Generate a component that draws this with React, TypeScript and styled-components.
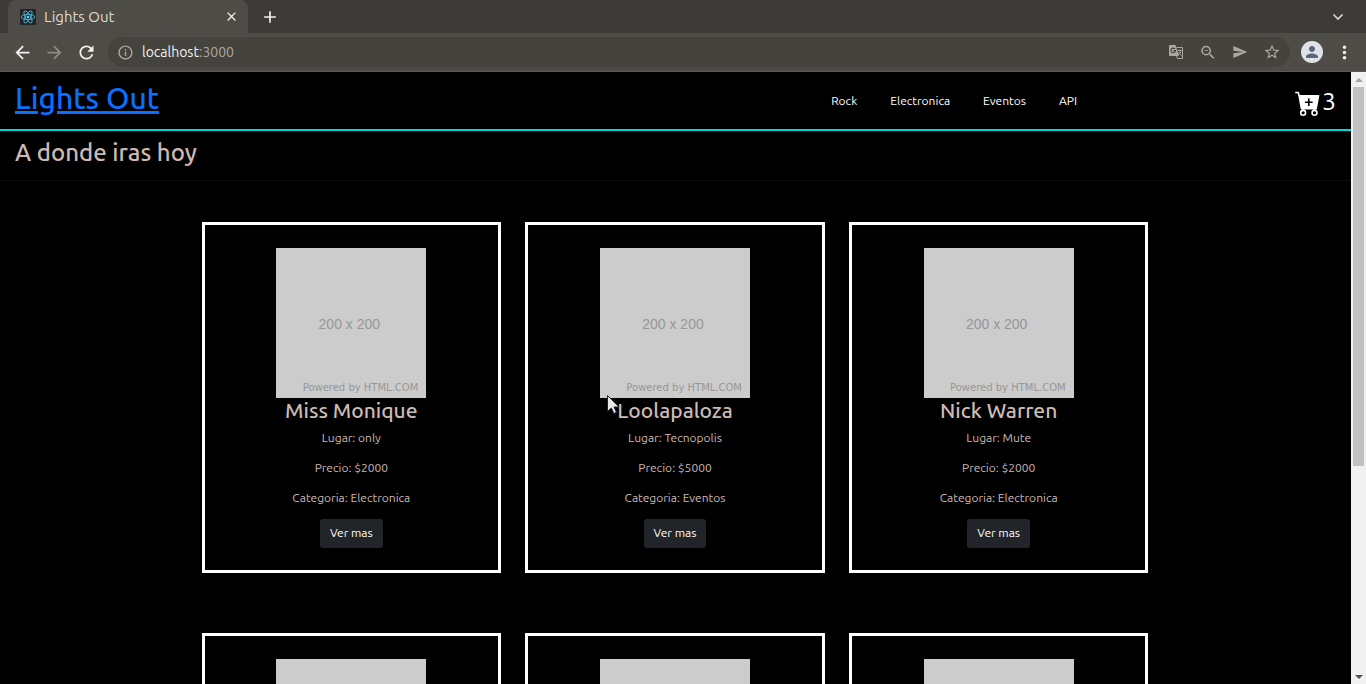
import React from "react";
import styled, { createGlobalStyle } from "styled-components";
import { BsCartPlusFill } from "react-icons/bs";
import {
  MdAdd,
  MdArrowBack,
  MdArrowForward,
  MdClose,
  MdInfoOutline,
  MdMoreVert,
  MdPerson,
  MdRefresh,
  MdSend,
  MdStarBorder,
  MdZoomOut,
} from "react-icons/md";

const GlobalStyle = createGlobalStyle`
  *, *::before, *::after { box-sizing: border-box; }
  body {
    margin: 0;
    background: #000;
    font-family: Ubuntu, "Noto Sans", sans-serif;
    font-size: 12px;
    line-height: 18px;
    overflow: hidden;
  }
  h1, h2, h3, p { margin: 0; }
  button { border: 0; padding: 0; background: none; font: inherit; color: inherit; }
`;

const Window = styled.div`
  display: flex;
  flex-direction: column;
  height: 100vh;
  overflow: hidden;
`;

const TabStrip = styled.div`
  display: flex;
  align-items: center;
  height: 33px;
  flex: none;
  padding: 0 20px 0 8px;
  background: #3c3b37;
  color: #dfdbd2;
`;

const Tab = styled.div`
  display: flex;
  align-items: center;
  gap: 8px;
  width: 240px;
  height: 33px;
  padding: 0 9px 0 12px;
  border-radius: 8px 8px 0 0;
  background: #4d4c46;
  font-size: 15px;
`;

const TabTitle = styled.span`
  flex: 1;
`;

const IconButton = styled.button<{ $size: number; $color?: string }>`
  display: flex;
  align-items: center;
  justify-content: center;
  flex: none;
  width: ${(p) => p.$size}px;
  height: ${(p) => p.$size}px;
  color: ${(p) => p.$color ?? "#f2f1ee"};
`;

const NewTab = styled(IconButton)`
  margin: 0 auto 0 12px;
`;

const Toolbar = styled.div`
  display: flex;
  align-items: center;
  gap: 11px;
  flex: none;
  height: 39px;
  padding: 0 11px 0 12px;
  background: #4d4c46;
  border-bottom: 1px solid #5b5a54;
`;

const AddressBar = styled.div`
  display: flex;
  align-items: center;
  flex: 1;
  gap: 8px;
  height: 30px;
  padding: 0 9px;
  border-radius: 15px;
  background: #44433d;
  color: #a9a8a3;
`;

const AddressInput = styled.div`
  flex: 1;
  font-size: 14px;
  color: #a9a8a3;

  b {
    font-weight: 400;
    color: #f2f1ee;
  }
`;

const AddressActions = styled.div`
  display: flex;
  gap: 14px;
`;

const Avatar = styled.button`
  display: flex;
  align-items: center;
  justify-content: center;
  width: 22px;
  height: 22px;
  border-radius: 50%;
  background: #dee1e6;
  color: #5a6478;
`;

const Viewport = styled.div`
  display: flex;
  flex: 1;
  min-height: 0;
`;

const Page = styled.main`
  flex: 1;
  min-width: 0;
  overflow: hidden;
  background: #000;
  color: #ccbab5;
`;

const Header = styled.header`
  display: grid;
  grid-template-columns: 1fr auto 259px;
  align-items: center;
  height: 59px;
  padding: 0 15px;
  border-bottom: 2px solid #00d8d8;
`;

const Brand = styled.a`
  display: block;
  padding-bottom: 6px;
  font-size: 30px;
  font-weight: 500;
  line-height: 36px;
  color: #0d6efd;
  text-decoration: underline;
`;

const Nav = styled.nav`
  display: flex;
  gap: 33px;

  a {
    color: #fff;
    text-decoration: none;
  }
`;

const Cart = styled.button`
  display: flex;
  align-items: center;
  justify-self: end;
  gap: 1px;
  color: #fff;
  font-size: 25px;
  line-height: 30px;

  svg {
    margin-top: 4px;
  }
`;

const Greeting = styled.h2`
  height: 50px;
  padding: 8px 15px;
  border-bottom: 1px solid #0b0b0b;
  font-size: 24px;
  font-weight: 500;
  line-height: 28px;
`;

const Grid = styled.section`
  display: grid;
  grid-template-columns: repeat(3, 1fr);
  gap: 60px 24px;
  max-width: 948px;
  margin: 41px auto 0;
  padding-right: 1px;
`;

const CardBox = styled.article`
  display: flex;
  flex-direction: column;
  align-items: center;
  gap: 12px;
  padding: 23px 22px 22px;
  border: 3px solid #fff;
`;

const Placeholder = styled.div`
  display: flex;
  flex-direction: column;
  justify-content: flex-end;
  width: 150px;
  height: 150px;
  padding: 0 8px 1px;
  background: #ccc;
  color: #969696;
`;

const Dimensions = styled.span`
  margin-bottom: 46px;
  padding-right: 4px;
  text-align: center;
  font-family: "Liberation Sans", sans-serif;
  font-size: 14px;
`;

const Credit = styled.span`
  text-align: right;
  font-family: "DejaVu Sans", sans-serif;
  font-size: 10px;
`;

const CardTitle = styled.h3`
  margin: -12px 0 -6px;
  padding-bottom: 1px;
  font-size: 21px;
  font-weight: 500;
  line-height: 24px;
`;

const More = styled.button`
  height: 29px;
  padding: 0 10px 2px;
  border-radius: 3px;
  background: #212529;
  color: #fff;
`;

const ScrollTrack = styled.div`
  display: flex;
  flex-direction: column;
  align-items: center;
  width: 15px;
  flex: none;
  background: #f1f1f1;
`;

const ScrollArrow = styled.button<{ $down?: boolean }>`
  display: flex;
  align-items: center;
  justify-content: center;
  width: 15px;
  height: 15px;
  margin-top: ${(p) => (p.$down ? "auto" : "0")};
  color: ${(p) => (p.$down ? "#505050" : "#a3a3a3")};
`;

const ScrollThumb = styled.div`
  width: 11px;
  height: 62%;
  background: #c1c1c1;
`;

const Pointer = styled.svg`
  position: absolute;
  left: 606px;
  top: 394px;
`;

const TabMark = () => (
  <svg width="16" height="16" viewBox="0 0 16 16" aria-hidden="true">
    <rect width="16" height="16" rx="1" fill="#20232a" />
    <g fill="none" stroke="#53c1de" strokeWidth="0.8">
      <ellipse cx="8" cy="8" rx="6.8" ry="2.6" />
      <ellipse cx="8" cy="8" rx="6.8" ry="2.6" transform="rotate(60 8 8)" />
      <ellipse cx="8" cy="8" rx="6.8" ry="2.6" transform="rotate(120 8 8)" />
    </g>
    <circle cx="8" cy="8" r="1.3" fill="#61dafb" />
  </svg>
);

const TranslateIcon = () => (
  <svg width="16" height="16" viewBox="0 0 16 16" fill="none" aria-hidden="true">
    <path d="M2 1h5.500L11 12H2a1 1 0 0 1-1-1V2a1 1 0 0 1 1-1z" fill="currentColor" />
    <path d="M7 5a2.300 2.300 0 1 0 .5 1.600H5.500" stroke="#44433d" strokeWidth="1.1" />
    <path d="M8.500 3.500h6v11H9.500L8.500 12M9.500 6.500h4M11.500 5.500v1M13 6.500c-.4 2-1.500 3.500-3 4.500M10.500 8c.8 1.500 1.600 2.500 3 3.500" stroke="currentColor" />
  </svg>
);

interface Show {
  name: string;
  place: string;
  price: number;
  category: string;
}

const shows: Show[] = [
  { name: "Miss Monique", place: "only", price: 2000, category: "Electronica" },
  { name: "Loolapaloza", place: "Tecnopolis", price: 5000, category: "Eventos" },
  { name: "Nick Warren", place: "Mute", price: 2000, category: "Electronica" },
];

const Card = ({ show }: { show?: Show }) => (
  <CardBox>
    <Placeholder>
      {show && (
        <>
          <Dimensions>200 x 200</Dimensions>
          <Credit>Powered by HTML.COM</Credit>
        </>
      )}
    </Placeholder>
    {show && (
      <>
        <CardTitle>{show.name}</CardTitle>
        <p>Lugar: {show.place}</p>
        <p>Precio: ${show.price}</p>
        <p>Categoria: {show.category}</p>
        <More type="button">Ver mas</More>
      </>
    )}
  </CardBox>
);

export default function App() {
  return (
    <>
      <GlobalStyle />
      <Window>
        <TabStrip>
          <Tab>
            <TabMark />
            <TabTitle>Lights Out</TabTitle>
            <IconButton $size={15} aria-label="Close tab"><MdClose size={15} /></IconButton>
          </Tab>
          <NewTab $size={20} aria-label="New tab"><MdAdd size={20} /></NewTab>
          <IconButton $size={16} $color="#dfdbd2" aria-label="Search tabs">
            <svg width="12" height="8" viewBox="0 0 12 8" fill="none" stroke="currentColor" strokeWidth="1.6">
              <path d="M1.5 1.5 6 6l4.500-4.500" />
            </svg>
          </IconButton>
        </TabStrip>
        <Toolbar>
          <IconButton $size={21} aria-label="Back"><MdArrowBack size={21} /></IconButton>
          <IconButton $size={21} $color="#8d8c87" aria-label="Forward"><MdArrowForward size={21} /></IconButton>
          <IconButton $size={21} aria-label="Reload"><MdRefresh size={21} /></IconButton>
          <AddressBar>
            <MdInfoOutline size={17} />
            <AddressInput><b>localhost</b>:3000</AddressInput>
            <AddressActions>
              <IconButton $size={18} $color="#a9a8a3" aria-label="Translate"><TranslateIcon /></IconButton>
              <IconButton $size={18} $color="#a9a8a3" aria-label="Zoom"><MdZoomOut size={19} /></IconButton>
              <IconButton $size={18} $color="#a9a8a3" aria-label="Share"><MdSend size={16} /></IconButton>
              <IconButton $size={18} $color="#a9a8a3" aria-label="Bookmark"><MdStarBorder size={18} /></IconButton>
            </AddressActions>
          </AddressBar>
          <Avatar aria-label="Profile"><MdPerson size={18} /></Avatar>
          <IconButton $size={21} aria-label="Menu"><MdMoreVert size={21} /></IconButton>
        </Toolbar>
        <Viewport>
          <Page>
            <Header>
              <h1><Brand href="#">Lights Out</Brand></h1>
              <Nav>
                <a href="#rock">Rock</a>
                <a href="#electronica">Electronica</a>
                <a href="#eventos">Eventos</a>
                <a href="#api">API</a>
              </Nav>
              <Cart type="button" aria-label="Cart, 3 items"><BsCartPlusFill size={26} />3</Cart>
            </Header>
            <Greeting>A donde iras hoy</Greeting>
            <Grid>
              {shows.map((show) => <Card key={show.name} show={show} />)}
              <Card />
              <Card />
              <Card />
            </Grid>
          </Page>
          <ScrollTrack>
            <ScrollArrow aria-label="Scroll up">
              <svg width="8" height="4" viewBox="0 0 8 4"><path d="M0 4 4 0l4 4z" fill="currentColor" /></svg>
            </ScrollArrow>
            <ScrollThumb />
            <ScrollArrow $down aria-label="Scroll down">
              <svg width="8" height="4" viewBox="0 0 8 4"><path d="M0 0l4 4 4-4z" fill="currentColor" /></svg>
            </ScrollArrow>
          </ScrollTrack>
        </Viewport>
      </Window>
      <Pointer width="14" height="22" viewBox="0 0 14 22" aria-hidden="true">
        <path d="M1.500 1.500v16l3.800-3.500 2.600 5.500 2.600-1.200-2.500-5.300h5z" fill="#e8e8e8" stroke="#222" />
      </Pointer>
    </>
  );
}
